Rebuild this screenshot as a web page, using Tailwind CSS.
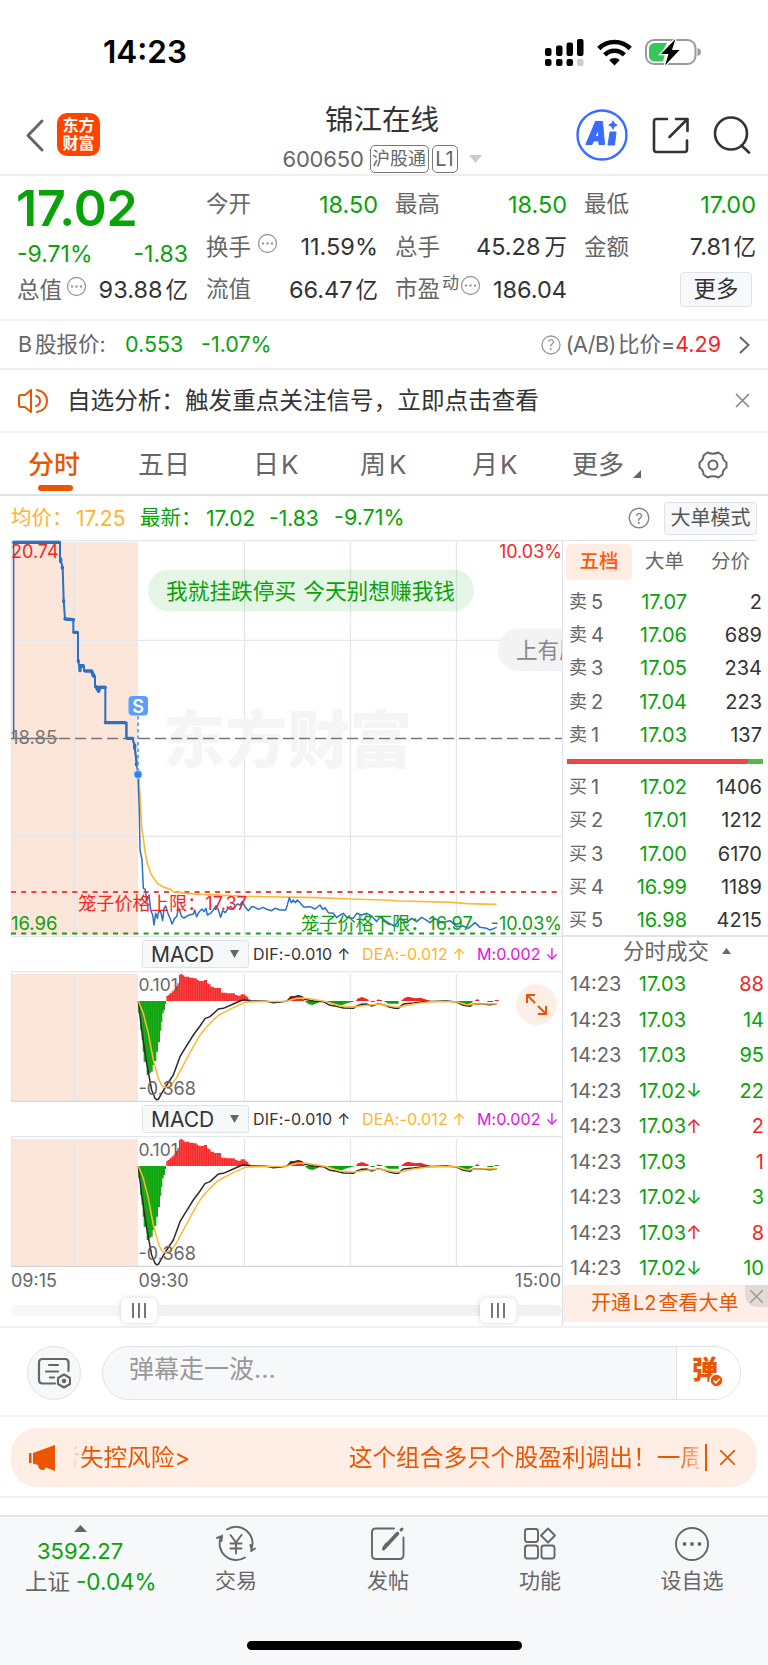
<!DOCTYPE html>
<html lang="zh-CN">
<head>
  <meta charset="UTF-8" />
  <meta name="viewport" content="width=device-width, initial-scale=1" />
  <title>锦江在线 600650</title>
  <script src="https://cdn.jsdelivr.net/npm/@tailwindcss/browser@4"></script>
</head>
<body class="w-[768px] h-[1665px] overflow-hidden bg-white text-[#333] leading-none whitespace-nowrap font-['Inter','Noto_Sans_CJK_SC',sans-serif]">

  <!-- status bar -->
  <div class="h-[88px] pt-[16px] pl-[103px] pr-[66px] flex items-center justify-between text-black">
    <span class="text-[31.5px] font-semibold">14:23</span>
    <div class="flex items-center gap-[13px]">
      <svg class="w-[39px] h-[27px]" viewBox="0 0 39 27">
        <rect x="0" y="9" width="6.5" height="8" rx="2"/><rect x="11" y="6.500" width="6.500" height="10.500" rx="2"/><rect x="21.500" y="3.500" width="6.500" height="13.500" rx="2"/><rect x="32" y="0" width="6.500" height="17" rx="2"/>
        <rect x="0" y="20" width="6.500" height="7" rx="2"/><rect x="11" y="20" width="6.500" height="7" rx="2"/><rect x="21.500" y="20" width="6.500" height="7" rx="2"/><rect x="32" y="20" width="6.500" height="7" rx="2" fill="#ccc"/>
      </svg>
      <svg class="w-[35px] h-[27px]" viewBox="0 0 35 27" fill="none" stroke="#000" stroke-width="4.600">
        <path d="M1.800 9.500C10.500.8 24.500.8 33.200 9.500"/><path d="M7.700 15.800c5.500-5.400 14.100-5.400 19.600 0"/>
        <path d="M17.500 26.500l-5.300-5.600c3-2.700 7.600-2.700 10.600 0z" fill="#000" stroke="none"/>
      </svg>
      <svg class="w-[57px] h-[28px]" viewBox="0 0 57 28">
        <rect x="1" y="2" width="49.500" height="24" rx="8" fill="#fff" stroke="#999" stroke-width="2"/>
        <path d="M4 10.500A5.500 5.500 0 0 1 9.500 5H22l-6 11h4l-2 7.500H9.500A5.500 5.500 0 0 1 4 18z" fill="#34c759"/>
        <path d="M52.500 10q3.500 1 3.500 4t-3.500 4z" fill="#999"/>
        <path d="M30.500 1L16 16h7.500l-3.500 11.500L34.500 12H27z" stroke="#fff" stroke-width="2.500" paint-order="stroke"/>
      </svg>
    </div>
  </div>

  <!-- header -->
  <header class="h-[88px] flex border-b-2 border-[#eee] pt-[10px]">
    <div class="w-[267px] flex items-start pl-[25px] pt-[15px]">
      <svg class="w-[20px] h-[44px]" viewBox="0 0 20 44" fill="none" stroke="#666" stroke-width="3" stroke-linecap="round" stroke-linejoin="round"><path d="M17 8L3 22.500 17 37"/></svg>
      <div class="ml-[12px] w-[43px] h-[43px] rounded-[10px] bg-[#ff4400] text-white font-bold text-[16px] leading-[17.500px] text-center pt-[4px]">东方<br>财富</div>
    </div>
    <div class="w-[230px] flex flex-col items-center">
      <h1 class="text-[28.500px] mt-[8px]">锦江在线</h1>
      <div class="flex items-center mt-[10px] text-[#666] text-[22px] h-[28px]">
        <span class="w-[87px] tracking-[-0.200px]">600650</span>
        <span class="w-[59px] h-[28px] rounded-[5px] border border-[#777] text-[18px] flex items-center justify-center">沪股通</span>
        <span class="ml-[3px] w-[26px] h-[28px] rounded-[5px] border border-[#777] text-[20px] flex items-center justify-center">L1</span>
        <svg class="ml-[11px] w-[13px] h-[8px]" viewBox="0 0 13 8"><path d="M0 0h13L6.500 8z" fill="#ccc"/></svg>
      </div>
    </div>
    <div class="flex items-center pl-[79px] gap-[24px] h-[74px]">
      <svg class="w-[52px] h-[52px]" viewBox="0 0 52 52">
        <circle cx="26" cy="26" r="24.500" fill="#fff" stroke="#3a6bff" stroke-width="2.400"/>
        <path d="M19.500 12.500H26.500L28.500 35.500H23L22.800 32H17.500L16 35.500H9.800Z M19 27.500H22.700L22.500 20.500Z" fill="#3a6bff" fill-rule="evenodd" stroke="#3a6bff" stroke-width="1" stroke-linejoin="round"/>
        <path d="M34 23H40L38.500 36H32Z" fill="#3a6bff" stroke="#3a6bff" stroke-width="1" stroke-linejoin="round"/>
        <path d="M37 11l1.700 3.300 3.300 1.700-3.300 1.700L37 21l-1.700-3.300L32 16l3.300-1.700z" fill="#3a6bff"/>
      </svg>
      <svg class="w-[37px] h-[37px]" viewBox="0 0 37 37" fill="none" stroke="#333" stroke-width="2.600" stroke-linecap="round" stroke-linejoin="round"><path d="M15 2H4.500Q2 2 2 4.500V32.500Q2 35 4.500 35H32.500Q35 35 35 32.500V23.500M24 2H35.500V14M35 2.500L17.500 20"/></svg>
      <svg class="w-[38px] h-[38px]" viewBox="0 0 38 38" fill="none" stroke="#333" stroke-width="2.600" stroke-linecap="round"><circle cx="18" cy="17.500" r="16"/><path d="M28.500 29.500L36 36.500"/></svg>
    </div>
  </header>

  <!-- quote -->
  <section class="h-[145px] border-b-2 border-[#f1f1f1] pl-[17px] pr-[12px] flex gap-[18px] text-[22.500px] text-[#666]">
    <div class="w-[171px] flex flex-col text-[#09a209]">
      <span class="text-[50px] font-semibold h-[36px] -ml-px mt-[14px] leading-[36px] tracking-[-0.200px]">17.02</span>
      <div class="flex justify-between mt-[16px] h-[24px] items-center text-[23px]"><span>-9.71%</span><span>-1.83</span></div>
      <div class="flex justify-between mt-[12px] h-[24px] items-center text-[#333]">
        <span class="text-[#666] flex items-center">总值<svg class="ml-[4px] w-[21px] h-[21px] relative -top-[4px]" viewBox="0 0 21 21"><circle cx="10.500" cy="10.500" r="9" fill="none" stroke="#999" stroke-width="1.300"/><g fill="#999"><circle cx="6" cy="10.500" r="1.200"/><circle cx="10.500" cy="10.500" r="1.200"/><circle cx="15" cy="10.500" r="1.200"/></g></svg></span>
        <span class="text-[23.500px]">93.88<span class="ml-[3px] text-[22.500px]">亿</span></span>
      </div>
    </div>
    <div class="w-[172px] pt-[16.500px] flex flex-col gap-[18.500px]">
      <div class="h-[24px] flex items-center justify-between"><span>今开</span><span class="text-[#09a209] text-[23.500px]">18.50</span></div>
      <div class="h-[24px] flex items-center justify-between"><span class="flex items-center">换手<svg class="ml-[6px] w-[21px] h-[21px] relative -top-[4px]" viewBox="0 0 21 21"><circle cx="10.500" cy="10.500" r="9" fill="none" stroke="#999" stroke-width="1.300"/><g fill="#999"><circle cx="6" cy="10.500" r="1.200"/><circle cx="10.500" cy="10.500" r="1.200"/><circle cx="15" cy="10.500" r="1.200"/></g></svg></span><span class="text-[#333] text-[23.500px]">11.59%</span></div>
      <div class="h-[24px] flex items-center justify-between"><span>流值</span><span class="text-[#333] text-[23.500px]">66.47<span class="ml-[3px] text-[22.500px]">亿</span></span></div>
    </div>
    <div class="w-[172px] pt-[16.500px] -ml-px flex flex-col gap-[18.500px]">
      <div class="h-[24px] flex items-center justify-between"><span>最高</span><span class="text-[#09a209] text-[23.500px]">18.50</span></div>
      <div class="h-[24px] flex items-center justify-between"><span>总手</span><span class="text-[#333] text-[23.500px]">45.28<span class="ml-[4px] text-[22.500px]">万</span></span></div>
      <div class="h-[24px] flex items-center justify-between"><span class="flex items-center">市盈<span class="text-[17px] ml-[2px] relative -top-[6px]">动</span><svg class="ml-px w-[21px] h-[21px] relative -top-[4px]" viewBox="0 0 21 21"><circle cx="10.500" cy="10.500" r="9" fill="none" stroke="#999" stroke-width="1.300"/><g fill="#999"><circle cx="6" cy="10.500" r="1.200"/><circle cx="10.500" cy="10.500" r="1.200"/><circle cx="15" cy="10.500" r="1.200"/></g></svg></span><span class="text-[#333] text-[23.500px]">186.04</span></div>
    </div>
    <div class="flex-1 pt-[16.500px] -ml-px flex flex-col gap-[18.500px]">
      <div class="h-[24px] flex items-center justify-between"><span>最低</span><span class="text-[#09a209] text-[23.500px]">17.00</span></div>
      <div class="h-[24px] flex items-center justify-between"><span>金额</span><span class="text-[#333] text-[23.500px]">7.81<span class="ml-[3px] text-[22.500px]">亿</span></span></div>
      <div class="h-[24px] flex items-center justify-end"><span class="w-[72px] h-[35px] mr-[4px] flex items-center justify-center rounded-[4px] border border-[#dfe2e8] bg-[#f7f8fa] text-[#333]">更多</span></div>
    </div>
  </section>

  <!-- B share -->
  <div class="h-[49px] border-b-2 border-[#eceef2] pl-[18px] pr-[18px] flex items-center text-[21.500px] text-[#666]">
    <span class="w-[107px] flex gap-[3px]"><span>B</span><span>股报价:</span></span>
    <span class="w-[76px] text-[#09a209]">0.553</span>
    <span class="text-[#09a209]">-1.07%</span>
    <svg class="ml-auto mr-[5px] w-[20px] h-[20px]" viewBox="0 0 20 20"><circle cx="10" cy="10" r="9" fill="none" stroke="#999" stroke-width="1.300"/><text x="10" y="15" font-size="14" text-anchor="middle" fill="#999">?</text></svg>
    <span class="flex"><span class="tracking-[-0.500px]">(A/B)</span><span class="ml-[2px]">比价=</span></span><span class="text-[#f52525]">4.29</span>
    <svg class="ml-[18px] w-[11px] h-[18px]" viewBox="0 0 11 18" fill="none" stroke="#666" stroke-width="2"><path d="M1 1l8.500 8L1 17"/></svg>
  </div>

  <!-- notice -->
  <div class="h-[63px] border-b-2 border-[#f1f1f1] pl-[17px] pr-[18px] flex items-center">
    <svg class="w-[32px] h-[28px]" viewBox="0 0 32 28" fill="none" stroke="#eb5500" stroke-width="2" stroke-linejoin="round" stroke-linecap="round"><path d="M14 3v22L8 20H4q-2 0-2-2v-8q0-2 2-2h4zM19 9q4 1 4 5t-4 5M20 3q10 2 10 11t-10 11"/></svg>
    <span class="ml-[18px] text-[23.600px]">自选分析：触发重点关注信号，立即点击查看</span>
    <svg class="ml-auto w-[15px] h-[15px]" viewBox="0 0 15 15" stroke="#888" stroke-width="1.700"><path d="M1 1l13 13M14 1L1 14"/></svg>
  </div>

  <!-- period tabs -->
  <nav class="h-[63px] border-b-2 border-[#dfe2e8] flex text-[26px] text-[#666] pl-[28px] pt-[18.500px]">
    <div class="w-[110px] text-[#eb5500]"><div class="font-medium">分时</div><div class="ml-[10px] mt-[7px] w-[35px] h-[6px] rounded-[3px] bg-[#eb5500]"></div></div>
    <span class="w-[115px]">五日</span>
    <span class="w-[107px] flex gap-[2px]"><span>日</span><span>K</span></span>
    <span class="w-[112px] flex gap-[3px]"><span>周</span><span>K</span></span>
    <span class="w-[100px] flex gap-[2px]"><span>月</span><span>K</span></span>
    <span class="w-[126px] flex">更多<svg class="ml-[9px] mt-[18px] w-[8px] h-[8px]" viewBox="0 0 8 8"><path d="M8 0v8H0z" fill="#666"/></svg></span>
    <svg class="w-[30px] h-[28px] -mt-px" viewBox="0 0 30 28" fill="none" stroke="#666" stroke-width="2" stroke-linejoin="round"><path d="M9.500 1.500Q15 4 20.500 1.500L24.500 4.500Q24.500 9 28.500 11.500V16.500Q24.500 19 24.500 23.500L20.500 26.500Q15 24 9.500 26.500L5.500 23.500Q5.500 19 1.500 16.500V11.500Q5.500 9 5.500 4.500Z"/><circle cx="15" cy="14" r="4.500"/></svg>
  </nav>

  <!-- average / latest -->
  <div class="h-[44px] pl-[11px] pr-[11px] flex items-center text-[20.500px] text-[#09a209]">
    <span class="w-[65px] text-[#ffb32c]">均价：</span><span class="w-[64px] text-[#ffb32c] text-[21px]">17.25</span>
    <span class="w-[66px]">最新：</span><span class="w-[63px] text-[21px]">17.02</span><span class="w-[65px] text-[21px]">-1.83</span><span class="text-[21.500px]">-9.71%</span>
    <svg class="ml-auto mr-[14px] w-[22px] h-[22px]" viewBox="0 0 22 22"><circle cx="11" cy="11" r="9.800" fill="none" stroke="#888" stroke-width="1.400"/><text x="11" y="16.500" font-size="15" text-anchor="middle" fill="#888">?</text></svg>
    <span class="w-[93px] h-[33px] flex items-center justify-center rounded-[4px] border border-[#dfe2e8] bg-[#f7f8fa] text-[#555] text-[20px]">大单模式</span>
  </div>

  <main class="h-[788px] flex border-b-2 border-[#f1f1f1]">
    <!-- charts -->
    <div class="w-[563px] border-r border-[#dfe2e8] flex flex-col">
      <svg class="w-[562px] h-[397px]" viewBox="0 540 562 397" font-size="18">
        <rect x="11" y="542" width="127" height="393" fill="#fce6da"/>
        <g stroke="#e2e6ee" stroke-width="1.300"><path d="M11 540.500H562M11 936.500H562M11 640.300H562M11 836.300H562M11.500 540V937M74.500 542V935M244.500 542V935M350.500 542V935M456.500 542V935"/></g>
        <text x="163" y="763" font-size="62" font-weight="900" fill="#f5f5f5" letter-spacing="0.300">东方财富</text>
        <path d="M59 738.500H562" stroke="#777" stroke-width="1.300" stroke-dasharray="11 5"/>
        <path d="M11 738.500H58" stroke="#777" stroke-width="1.300"/>
        <path d="M11 892H562" stroke="#f04040" stroke-width="1.800" stroke-dasharray="5 5.200"/>
        <path d="M11 933.500H562" stroke="#1f9a1f" stroke-width="1.800" stroke-dasharray="5 5.200"/>
        <!-- screen comments -->
        <rect x="148" y="569.500" width="326" height="42" rx="21" fill="#09a209" fill-opacity=".1"/>
        <text x="166" y="598.500" font-size="21.700" fill="#09a209" word-spacing="1">我就挂跌停买 今天别想赚我钱</text>
        <path d="M562 628.500H519a21.200 21.200 0 0 0 0 42.500H562z" fill="#f3f3f3"/>
        <text x="516" y="658" font-size="21.600" fill="#888">上有压</text>
        <g transform="translate(0 530) scale(.33333)" fill="none" stroke-linejoin="round">
          <path stroke="#ffb835" stroke-width="5" d="M416 735L420 800 425 890 430 925 435 965 442 1000 452 1030 465 1050 475 1063 495 1073 510 1077 520 1085 560 1090 620 1094 740 1099 950 1103 1050 1107 1150 1110 1200 1113 1360 1117 1400 1121 1490 1123"/>
          <path stroke="#2a70c4" stroke-width="4.500" d="M41 626V36M378 576V624L398 628 404 650 408 690 414 735 418 850 420 960 426 990 430 1075 436 1078 440 1115 447 1095 452 1140 458 1155 462 1185 467 1150 472 1165 476 1145 482 1145 488 1172 492 1135 497 1128 502 1145 510 1165 516 1182 524 1165 530 1160 536 1133 545 1160 552 1164 565 1156 580 1152 584 1140 590 1160 598 1145 606 1137 612 1145 618 1135 622 1155 632 1150 640 1140 648 1128 655 1140 662 1162 668 1142 676 1148 684 1135 692 1130 700 1138 712 1122 720 1125 727 1115 735 1130 745 1142 755 1130 765 1132 775 1138 790 1132 800 1138 815 1142 825 1135 840 1140 857 1140 862 1125 868 1103 874 1118 880 1110 886 1118 892 1110 900 1118 912 1132 930 1130 945 1137 960 1125 968 1138 975 1133 985 1148 1000 1150 1010 1163 1020 1155 1030 1150 1040 1162 1060 1165 1070 1150 1085 1155 1100 1150 1115 1158 1130 1175 1140 1160 1155 1172 1170 1182 1185 1188 1200 1165 1220 1178 1235 1165 1250 1175 1265 1162 1275 1168 1290 1178 1305 1166 1325 1178 1350 1172 1370 1190 1390 1188 1405 1195 1425 1178 1440 1192 1460 1195 1470 1200 1490 1192"/>
          <path stroke="#2a70c4" stroke-width="6" d="M41 37H180V85L188 112 191 212 195 267H220V307H234V390L238 410H252V423H275L285 438V470H316V578H380V624H398L404 650 411 705"/>
          <path stroke="#2a70c4" stroke-width="10" stroke-linecap="round" d="M41 37H178M182 87V95M187 112V114M191 212V214M195 267L220 269M222 307H232M235 392V394M240 407V422M240 407H250M256 423H275L280 438M288 470L296 484 300 472H316M316 578H376M382 625H398M404 645V655M409 702V704"/>
        </g>
        <path d="M138 716V771" stroke="#4a94ff" stroke-width="1.600" stroke-dasharray="3.500 3"/>
        <circle cx="138" cy="774.500" r="4" fill="#2f7ff5" stroke="#a5caff" stroke-width="1"/>
        <rect x="128.500" y="696" width="19.500" height="19.500" rx="4" fill="#5b9eff"/>
        <text x="138.200" y="712.500" font-weight="600" text-anchor="middle" fill="#fff">S</text>
        <text x="11" y="558" fill="#f52525">20.74</text>
        <text x="562" y="558" fill="#f52525" text-anchor="end">10.03%</text>
        <text x="11" y="744" fill="#777" font-size="18.500">18.85</text>
        <text x="11" y="930" fill="#09a209" font-size="18.500">16.96</text>
        <text x="562" y="930" fill="#09a209" text-anchor="end">-10.03%</text>
        <text x="78" y="910" fill="#f52525" font-size="18.200">笼子价格上限：17.37</text>
        <text x="301" y="930" fill="#09a209" font-size="18.200">笼子价格下限：16.97</text>
      </svg>

      <div class="h-[34px] pl-[142px] flex items-center text-[16px] text-[#333]">
        <span class="w-[107px] h-[28px] rounded-[3px] border border-[#dfe2e8] bg-[#f7f8fa] pl-[8px] pr-[9px] flex items-center justify-between text-[21px]">MACD<svg class="w-[9px] h-[8px]" viewBox="0 0 9 8"><path d="M0 0h9L4.500 8z" fill="#666"/></svg></span>
        <span class="ml-[4px] w-[109px] tracking-[0.150px]">DIF:-0.010 ↑</span>
        <span class="w-[115px] text-[#ffb32c] tracking-[0.150px]">DEA:-0.012 ↑</span>
        <span class="text-[#e312e3] tracking-[0.100px]">M:0.002 ↓</span>
      </div>
      <div class="relative h-[131px]">
        <svg class="w-[562px] h-[131px]" viewBox="0 971 562 131" font-size="17.500">
          <defs>
            <pattern id="up" width="5.400" height="10" patternUnits="userSpaceOnUse"><rect width="5.400" height="10" fill="#f52525"/><rect width="1" height="10" fill="#ff8080"/></pattern>
            <pattern id="down" width="5.400" height="10" patternUnits="userSpaceOnUse"><rect width="5.400" height="10" fill="#09a209"/><rect width="1" height="10" fill="#4abf4a"/></pattern>
            <g id="macd">
              <rect x="11" y="974" width="127" height="127" fill="#fce6da"/>
              <path d="M11 971.500H562M11.500 971V1101M74.500 974V1101M244.500 974V1101M350.500 974V1101M456.500 974V1101" stroke="#e2e6ee" stroke-width="1.300"/>
              <path d="M11 1101.400H562" stroke="#d3d6de" stroke-width="1.300"/>
              <g transform="translate(0 930) scale(.33333)" fill="none" stroke-linejoin="round">
                <path fill="url(#down)" d="M415 213H498V222H495V240H491V250H487V275H484V302H480V337H474V365H469V393H462V405H458V425H452V430H445V435H440V395H431V365H428V330H425V300H421V250H415z"/>
                <path fill="url(#up)" d="M499 213V198H503V195H508V190H515V184H521V178H527V168H532V160H537V135H541V131H547V136H553V140H568V143H580V145H590V149H596V153H612V150H621V160H626V163H632V170H642V174H663V188H680V190H705V195H712V197H722V193H735V197H740V201H745V208H751V213z"/>
                <path fill="#f52525" d="M865 213L870 198H900L915 213zM1068 213L1072 206 1085 201 1094 204 1106 209V213zM1128 213L1135 208 1145 213zM1202 213L1215 203 1225 200 1245 205 1262 203 1275 208 1295 213zM1423 213L1432 207 1440 213zM1484 210H1496V213H1484zM1138 210H1146V213H1138z"/>
                <path fill="#09a209" d="M914 213L925 222 937 225 955 218 962 213zM975 213L1000 221 1025 226 1040 220 1066 213zM1112 213H1124V216H1112zM1152 213L1165 221H1196V213zM1370 213L1382 219 1400 224 1415 218 1420 213zM1462 213H1480V216H1462z"/>
                <path stroke="#2b2b2b" stroke-width="4.500" d="M415 213L425 300 440 400 455 480 465 505 470 509 475 508 485 490 500 465 520 435 540 380 555 355 580 315 600 288 615 266 630 260 655 237 670 235 700 222 720 213 732 209 750 213 800 214 820 218 860 214 870 204 895 197 905 200 915 208 940 213 970 215 990 226 1010 229 1030 234 1060 235 1070 228 1085 223 1100 222 1115 228 1135 221 1150 224 1165 230 1185 235 1195 235 1210 222 1240 219 1270 215 1340 213 1370 216 1390 226 1410 229 1420 222 1440 221 1470 224 1490 221"/>
                <path stroke="#ffb835" stroke-width="4.500" d="M415 213L430 250 445 310 460 390 475 445 485 467 493 472 500 472 515 463 530 443 550 405 580 350 600 315 620 290 650 260 670 248 700 233 735 217 760 215 860 214 890 205 910 204 940 208 980 215 1020 228 1060 231 1100 226 1140 222 1180 230 1200 231 1240 222 1290 215 1370 215 1400 224 1430 222 1490 221"/>
              </g>
            </g>
          </defs>
          <use href="#macd"/>
          <text x="138.500" y="991" fill="#666">0.101</text>
          <text x="138.500" y="1094.500" fill="#666" font-size="18">-0.368</text>
        </svg>
        <div class="absolute left-[516px] top-[13px] w-[41px] h-[41px] rounded-full bg-[#fdefe8] flex items-center justify-center">
          <svg class="w-[21px] h-[21px]" viewBox="0 0 21 21" fill="none" stroke="#eb5500" stroke-width="2"><path d="M1 9V1h8M1 1l8 8M20 12v8h-8M20 20l-8-8"/></svg>
        </div>
      </div>

      <div class="h-[34px] pl-[142px] flex items-center text-[16px] text-[#333]">
        <span class="w-[107px] h-[28px] rounded-[3px] border border-[#dfe2e8] bg-[#f7f8fa] pl-[8px] pr-[9px] flex items-center justify-between text-[21px]">MACD<svg class="w-[9px] h-[8px]" viewBox="0 0 9 8"><path d="M0 0h9L4.500 8z" fill="#666"/></svg></span>
        <span class="ml-[4px] w-[109px] tracking-[0.150px]">DIF:-0.010 ↑</span>
        <span class="w-[115px] text-[#ffb32c] tracking-[0.150px]">DEA:-0.012 ↑</span>
        <span class="text-[#e312e3] tracking-[0.100px]">M:0.002 ↓</span>
      </div>
      <svg class="w-[562px] h-[131px]" viewBox="0 971 562 131" font-size="17.500">
        <use href="#macd"/>
        <text x="138.500" y="991" fill="#666">0.101</text>
        <text x="138.500" y="1094.500" fill="#666" font-size="18">-0.368</text>
      </svg>

      <div class="h-[28px] pl-[11px] pr-[1px] flex items-center text-[18px] text-[#666]">
        <span class="w-[127.500px]">09:15</span><span>09:30</span><span class="ml-auto">15:00</span>
      </div>
      <!-- range slider -->
      <div class="h-[30px] ml-[11px] flex items-center">
        <div class="w-[110px] h-[11px] rounded-l-full bg-[#f7f7f9]"></div>
        <div class="w-[36px] h-[25px] rounded-[6px] bg-white shadow-[0_0_5px_rgba(0,0,0,0.18)] flex items-center justify-center gap-[4px]"><i class="w-[2px] h-[15px] bg-[#777]"></i><i class="w-[2px] h-[15px] bg-[#777]"></i><i class="w-[2px] h-[15px] bg-[#777]"></i></div>
        <div class="w-[323px] h-[11px] bg-[#f0f1f3]"></div>
        <div class="w-[36px] h-[25px] rounded-[6px] bg-white shadow-[0_0_5px_rgba(0,0,0,0.18)] flex items-center justify-center gap-[4px]"><i class="w-[2px] h-[15px] bg-[#777]"></i><i class="w-[2px] h-[15px] bg-[#777]"></i><i class="w-[2px] h-[15px] bg-[#777]"></i></div>
        <div class="flex-1 h-[11px] rounded-r-full bg-[#f0f1f3]"></div>
      </div>
    </div>

    <!-- order book -->
    <div class="w-[205px] flex flex-col">
      <div class="border-t border-[#dfe2e8] mr-[11px] h-[42px] pt-[3px] pl-[3px] flex text-[19.500px] text-[#666]">
        <span class="w-[66px] h-[36px] shrink-0 rounded-[5px] bg-[#ffede3] text-[#fb5a0c] font-medium flex items-center justify-center">五档</span>
        <span class="ml-[13px] w-[66px] h-[36px] flex items-center">大单</span>
        <span class="h-[36px] flex items-center">分价</span>
      </div>
      <div id="sell" class="mt-[3px] pl-[6px] pr-[6px]"></div>
      <div class="h-[5px] mt-[8px] ml-[4px] mr-[5px] bg-[linear-gradient(120deg,#ec4646_91.5%,#55b840_91.7%)]"></div>
      <div id="buy" class="mt-[6px] pl-[6px] pr-[6px] h-[165px]"></div>
      <div class="border-t-2 border-[#dfe2e8] h-[30px] pl-[23px] flex items-center justify-center text-[21.500px] text-[#666]">分时成交<svg class="ml-[13px] w-[9px] h-[6px]" viewBox="0 0 9 6"><path d="M4.500 0L9 6H0z" fill="#666"/></svg></div>
      <div id="deals" class="pt-px pl-[7px] pr-[4px] h-[320px]"></div>
      <div class="relative h-[37px] bg-[#fdefe8] text-[#eb5500] text-[20px] flex items-center pl-[28px] pb-[2px]">
        <span>开通</span><span class="mx-[2px]">L2</span><span>查看大单</span>
        <span class="absolute right-0 top-0 w-[23px] h-[22px] rounded-bl-[12px] bg-[#e3dad6] flex items-center justify-center"><svg class="w-[13px] h-[13px]" viewBox="0 0 13 13" stroke="#999" stroke-width="1.500"><path d="M0 0l13 13M13 0L0 13"/></svg></span>
      </div>
    </div>
  </main>

  <!-- comment input -->
  <div class="h-[89px] border-b-2 border-[#f5f5f5] pt-[2px] pl-[27px] flex items-center">
    <div class="w-[54px] h-[54px] rounded-full border-[1.500px] border-[#dfe2e8] bg-[#f7f8fa] flex items-center justify-center">
      <svg class="w-[34px] h-[32px]" viewBox="0 0 34 32" fill="none" stroke="#666" stroke-width="2.200" stroke-linecap="round"><path d="M31.500 14V5.500Q31.500 2 28 2H5.500Q2 2 2 5.500V23Q2 26.500 5.500 26.500H18M12 8h9M9 14.500h12M13 20.500h4"/><path d="M27 17.500l6 3.500v6l-6 3.500-6-3.500v-6z" stroke-linejoin="round"/><circle cx="27" cy="24" r="1.200" fill="#666"/></svg>
    </div>
    <div class="ml-[21px] w-[639px] h-[54px] rounded-full border-[1.500px] border-[#dfe2e8] bg-[#f7f8fa] flex overflow-hidden">
      <span class="flex-1 pl-[26px] pt-[10px] text-[25px] text-[#999]">弹幕走一波<span>...</span></span>
      <div class="w-[64px] border-l-[1.500px] border-[#dfe2e8] bg-white pl-[15px] pt-[10px]">
        <div class="relative w-[32px] text-[26px] font-black text-[#eb5500]">弹
          <svg class="absolute left-[17px] top-[16px] w-[15px] h-[15px]" viewBox="0 0 15 15"><circle cx="7.500" cy="7.500" r="6.500" fill="#eb5500" stroke="#fff" stroke-width="1.500"/><path d="M4.500 7.500l2.300 2.300 4-4" fill="none" stroke="#fff" stroke-width="1.600"/></svg>
        </div>
      </div>
    </div>
  </div>

  <!-- scrolling banner -->
  <div class="h-[81px] border-b-2 border-[#f1f1f1] px-[11px] pt-[11px]">
    <div class="h-[59px] rounded-[26px] bg-[#feeee6] flex items-center text-[23.700px] text-[#eb5500] pl-[17px] pr-[22px]">
      <svg class="w-[28px] h-[26px]" viewBox="0 0 28 26" fill="#eb5500"><path d="M1 8h2.500v10H1zM5 8L27 0v26l-9-3.500q-1 3-4 2.500-3.500-.5-4-5L5 18.500z"/></svg>
      <div class="ml-[17px] w-[626px] flex overflow-hidden [mask-image:linear-gradient(90deg,transparent,#000_12px,#000_604px,rgba(0,0,0,0.3))]">
        <span class="-ml-[17px]">者</span><span class="w-[269px] shrink-0">失控风险&gt;</span><span>这个组合多只个股盈利调出！一周</span>
      </div>
      <div class="ml-[6px] w-[1.500px] h-[27px] bg-[#eb5500]"></div>
      <svg class="ml-auto w-[15px] h-[15px]" viewBox="0 0 15 15" stroke="#eb5500" stroke-width="1.700"><path d="M0 0l15 15M15 0L0 15"/></svg>
    </div>
  </div>

  <!-- bottom bar -->
  <footer class="mt-[17px] h-[150px] border-t-2 border-[#e4e6ea] bg-[#f7f8fa] text-[#666] flex flex-col">
    <div class="h-[124px] flex">
      <div class="w-[160px] pl-[25px] flex flex-col text-[22px]">
        <svg class="ml-[49px] mt-[8px] w-[13px] h-[7px]" viewBox="0 0 13 7"><path d="M6.500 0L13 7H0z" fill="#666"/></svg>
        <span class="ml-[12px] mt-[8px] text-[#09a209]">3592.27</span>
        <span class="mt-[9px] flex"><span class="w-[51px] text-[22.500px]">上证</span><span class="text-[#09a209] text-[22.500px]">-0.04%</span></span>
      </div>
      <div class="w-[152px] flex flex-col items-center text-[21px] gap-[7px] pt-[8px]">
        <svg class="w-[40px] h-[38px]" viewBox="0 0 40 38" fill="none" stroke="#666" stroke-width="1.900" stroke-linecap="round"><path d="M11 4.500A16.500 16.500 0 0 1 35.500 24M35 26l4-2.500M35.500 24.500L34.500 20M29 32.500A16.500 16.500 0 0 1 5 12M1 13l5-2-.5 5"/><path d="M14.500 10l5.500 7.500 5.500-7.500M20 17.500V28.500M14.500 18.500h11M14.500 23.500h11"/></svg>
        <span>交易</span>
      </div>
      <div class="w-[152px] flex flex-col items-center text-[21px] gap-[7px] pt-[8px]">
        <svg class="w-[36px] h-[38px]" viewBox="0 0 36 38" fill="none" stroke="#666" stroke-width="1.900" stroke-linecap="round"><path d="M24 3.500H6Q2 3.500 2 7.500V30Q2 34 6 34H29.500Q33.500 34 33.500 30V12.500"/><path d="M14.500 22.500L27.500 8.500" stroke-width="3.600"/><path d="M13.500 24l3-5M31 5l1-1" stroke-width="3"/></svg>
        <span>发帖</span>
      </div>
      <div class="w-[152px] flex flex-col items-center text-[21px] gap-[7px] pt-[8px]">
        <svg class="w-[34px] h-[38px]" viewBox="0 0 34 38" fill="none" stroke="#666" stroke-width="1.900" stroke-linejoin="round"><rect x="2" y="4" width="13" height="13" rx="2.500"/><rect x="2" y="20.500" width="13" height="13" rx="2.500"/><rect x="18.500" y="20.500" width="13" height="13" rx="2.500"/><path d="M25 3.500l7 7-7 7-7-7z"/></svg>
        <span>功能</span>
      </div>
      <div class="w-[152px] flex flex-col items-center text-[21px] gap-[7px] pt-[8px]">
        <svg class="w-[36px] h-[38px]" viewBox="0 0 36 38"><circle cx="18" cy="19" r="16" fill="none" stroke="#666" stroke-width="1.900"/><g fill="#666"><circle cx="10.500" cy="19" r="1.900"/><circle cx="18" cy="19" r="1.900"/><circle cx="25.500" cy="19" r="1.900"/></g></svg>
        <span>设自选</span>
      </div>
    </div>
    <div class="mx-auto w-[275px] h-[9px] rounded-full bg-black"></div>
  </footer>

  <script>
    const sell = [[5, "17.07", 2], [4, "17.06", 689], [3, "17.05", 234], [2, "17.04", 223], [1, "17.03", 137]];
    const buy = [[1, "17.02", 1406], [2, "17.01", 1212], [3, "17.00", 6170], [4, "16.99", 1189], [5, "16.98", 4215]];
    const deals = [
      ["17.03", "", 88, "b"], ["17.03", "", 14, "s"], ["17.03", "", 95, "s"],
      ["17.02", "↓", 22, "s"], ["17.03", "↑", 2, "b"], ["17.03", "", 1, "b"],
      ["17.02", "↓", 3, "s"], ["17.03", "↑", 8, "b"], ["17.02", "↓", 10, "s"],
    ];

    const level = (side) => ([n, price, vol]) => `
      <div class="h-[33.300px] flex items-center text-[20px]">
        <span class="w-[37px] flex gap-[4px] text-[#666]"><span class="text-[18px] leading-[20px]">${side}</span><span>${n}</span></span>
        <span class="w-[81px] text-right text-[#09a209]">${price}</span>
        <span class="ml-auto">${vol}</span>
      </div>`;

    document.getElementById("sell").innerHTML = sell.map(level("卖")).join("");
    document.getElementById("buy").innerHTML = buy.map(level("买")).join("");
    document.getElementById("deals").innerHTML = deals.map(([price, arrow, vol, dir]) => `
      <div class="h-[35.500px] flex items-center text-[20px]">
        <span class="w-[53px] text-[#666]">14:23</span>
        <span class="w-[63px] text-right text-[#09a209]">${price}</span>
        <span class="text-[19px] ${arrow === "↑" ? "text-[#f52525]" : "text-[#09a209]"}">${arrow}</span>
        <span class="ml-auto ${dir === "b" ? "text-[#f52525]" : "text-[#09a209]"}">${vol}</span>
      </div>`).join("");
  </script>
</body>
</html>
